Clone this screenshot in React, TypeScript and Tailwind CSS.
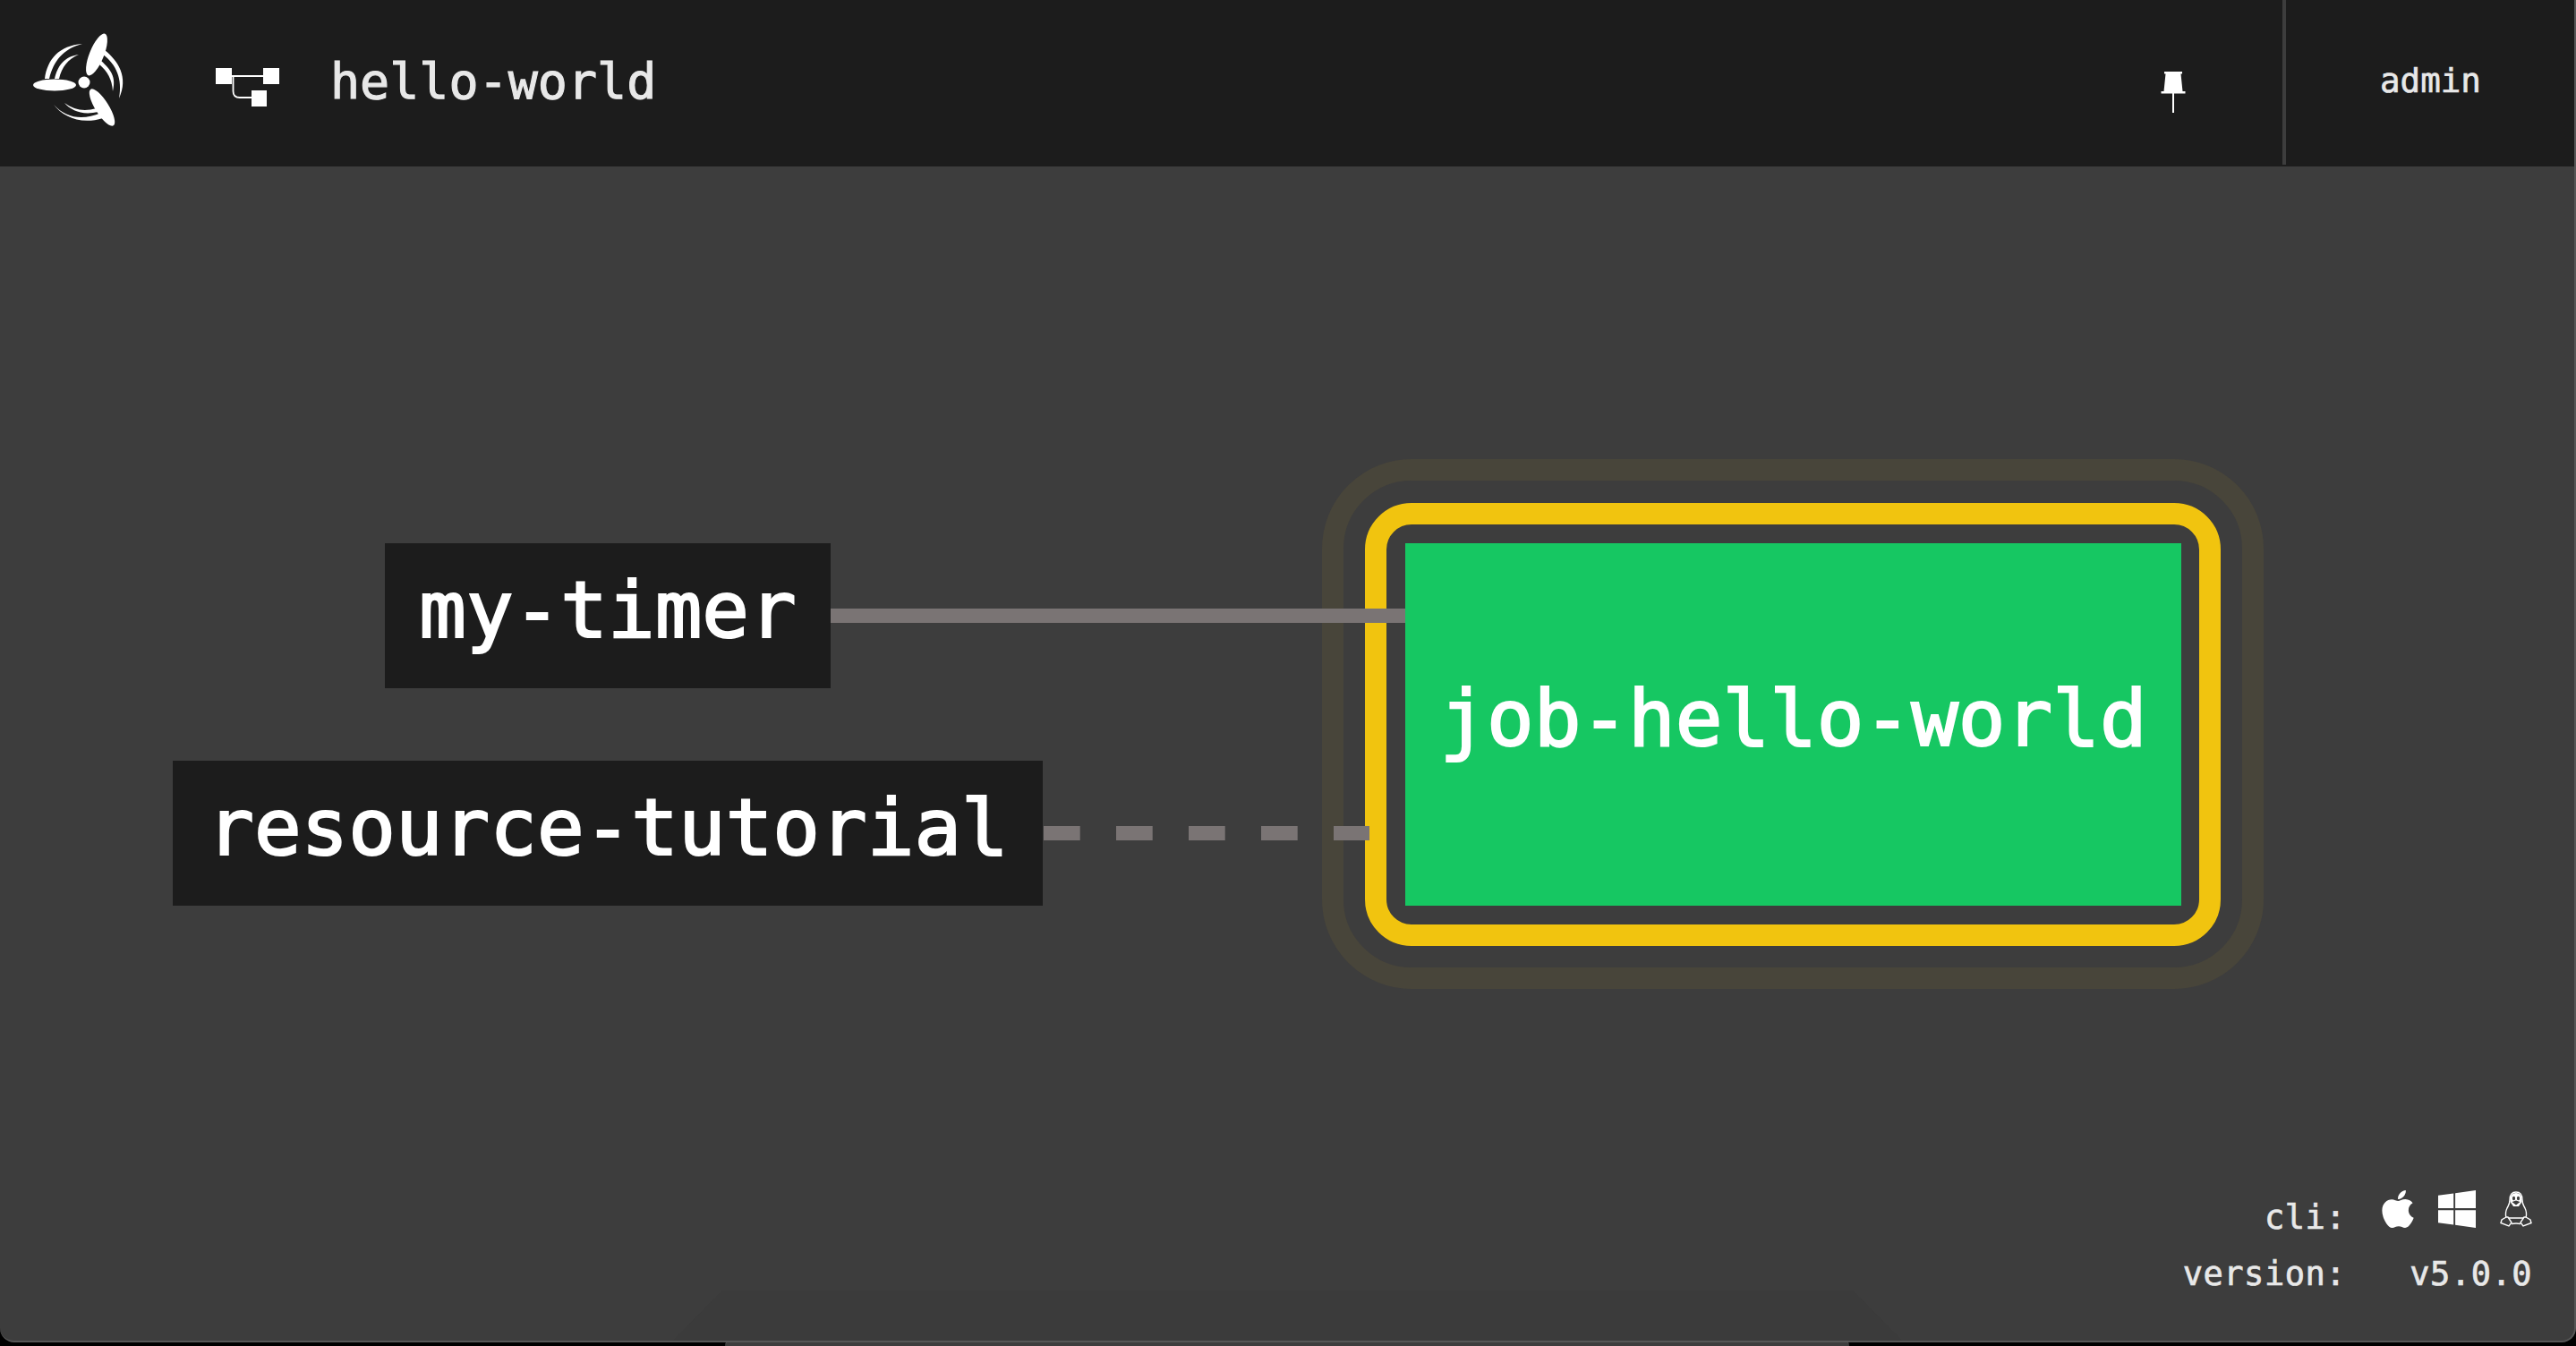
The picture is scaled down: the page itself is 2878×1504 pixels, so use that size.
import { FaApple, FaWindows } from "react-icons/fa";

const mono = "font-['DejaVu_Sans_Mono',monospace]";

function Logo() {
  return (
    <svg viewBox="0 0 130 130" className="h-[130px] w-[130px]" fill="#fff">
      <circle cx="74" cy="72" r="6.5" />
      <ellipse cx="41" cy="75" rx="24" ry="6.5" />
      <ellipse cx="0" cy="0" rx="25" ry="8" transform="translate(88 41) rotate(-68)" />
      <ellipse cx="0" cy="0" rx="24" ry="7.5" transform="translate(94 100) rotate(58)" />
      <path d="M30 68C33 46 46 31 72 29C50 35 40 48 35 68Z" />
      <path d="M41 68C44 54 52 43 68 41C56 46 49 55 46 68Z" />
      <path d="M97 36C112 48 124 66 113 90C117 68 110 52 95 41Z" />
      <path d="M93 48C104 58 110 66 106 82C105 68 100 60 91 52Z" />
      <path d="M40 97C50 110 70 120 95 112L93 106C72 115 54 112 40 97Z" />
      <path d="M52 95C60 104 72 109 90 105L88 101C74 105 63 103 52 95Z" />
    </svg>
  );
}

function GraphIcon() {
  return (
    <svg viewBox="0 0 72 46" className="h-[46px] w-[72px]">
      <rect x="0" y="0" width="18" height="18" fill="#fff" />
      <rect x="53" y="0" width="18" height="18" fill="#fff" />
      <rect x="40" y="25" width="17" height="18" fill="#fff" />
      <path d="M18 9H54M19.5 10V26Q19.5 33 27 33H40" stroke="#fff" strokeWidth="1.8" fill="none" />
    </svg>
  );
}

function PinIcon() {
  return (
    <svg viewBox="0 0 28 46" className="h-[46px] w-[28px]" fill="#fff">
      <path d="M4 0H24V2.5H22.5L24.5 22H27.5V24.5H0.5V22H3.5L5.5 2.5H4Z" />
      <rect x="13" y="24" width="2" height="22" />
    </svg>
  );
}

function TuxIcon() {
  return (
    <svg viewBox="0 0 36 40" className="h-[40px] w-[36px]" fill="none" stroke="#fff" strokeWidth="1.4">
      <path d="M18 1C12.5 1 11 5 11 10C11 14 10 15 8 19C6 23 6 26 7 30H29C30 26 30 23 28 19C26 15 25 14 25 10C25 5 23.5 1 18 1Z" />
      <path d="M7 29L2 32L1 35.5L10 39L13 35L9 29ZM29 29L34 32L35 35.5L26 39L23 35L27 29Z" fill="#3d3d3d" />
      <path d="M13 36.5Q18 35.5 23 36.5" />
      <path d="M11.5 12C11 5 14 2 18 2C22 2 25 5 24.5 12L21 17H15Z" fill="#fff" stroke="none" />
      <ellipse cx="15.5" cy="8" rx="1.6" ry="2.2" fill="#3d3d3d" stroke="none" />
      <ellipse cx="20.5" cy="8" rx="1.6" ry="2.2" fill="#3d3d3d" stroke="none" />
      <path d="M13.5 12L18 10.5L22.5 12L18 15.5Z" fill="#3d3d3d" stroke="none" />
    </svg>
  );
}

function Edges() {
  return (
    <svg className="absolute left-0 top-0 h-[1504px] w-[2878px]" viewBox="0 0 2878 1504">
      <line x1="928" y1="688" x2="1570" y2="688" stroke="#7a7474" strokeWidth="16" />
      <line x1="1166" y1="931" x2="1530" y2="931" stroke="#7a7474" strokeWidth="16" strokeDasharray="40.7 40.3" />
    </svg>
  );
}

function TaskNode({ label, className }: { label: string; className: string }) {
  return (
    <div className={`absolute flex h-[162px] items-center justify-center bg-[#1c1c1c] pb-[10px] text-[87.5px] leading-none text-white [-webkit-text-stroke:2.2px_white] ${className}`}>
      {label}
    </div>
  );
}

export default function App() {
  return (
    <div className={`relative h-[1504px] w-[2878px] overflow-hidden bg-black ${mono}`}>
      <div className="absolute bottom-0 left-[810px] h-[8px] w-[1256px] rounded-t-[8px] border-t-2 border-[#565656] bg-[#3d3d3d]" />
      <div className="relative flex h-[1500px] flex-col overflow-hidden rounded-b-[16px] border-r-2 border-b-2 border-[#565656] bg-[#3d3d3d]">
        <header className="flex h-[186px] shrink-0 items-center bg-[#1c1c1c] text-[#e8e8e8]">
          <div className="ml-[20px] mt-[-16px]">
            <Logo />
          </div>
          <div className="ml-[91px] mt-[12px]">
            <GraphIcon />
          </div>
          <span className="ml-[56px] mt-[-4px] text-[55px] leading-none [-webkit-text-stroke:1.1px_#e8e8e8]">hello-world</span>
          <div className="ml-auto mr-[108px] mt-[20px]">
            <PinIcon />
          </div>
          <div className="flex h-[184px] w-[326px] items-center self-start border-l-[4px] border-[#3d3d3d] pl-[105px] pb-[2px] text-[37.5px] leading-none [-webkit-text-stroke:0.7px_#e8e8e8]">
            admin
          </div>
        </header>

        <div className="absolute bottom-0 left-[752px] h-[56px] w-[1373px] bg-[#3b3b3b] [clip-path:polygon(4%_0,96%_0,100%_100%,0_100%)]" />

        <div className="absolute left-[1477px] top-[513px] h-[592px] w-[1052px] rounded-[100px] border-[24px] border-[#48453a]" />
        <div className="absolute left-[1525px] top-[562px] h-[495px] w-[956px] rounded-[52px] border-[24px] border-[#f1c40f]" />
        <div className="absolute left-[1570px] top-[607px] flex h-[405px] w-[867px] items-center justify-center bg-[#16c762] pb-[12px] text-[87.5px] leading-none text-white [-webkit-text-stroke:2.2px_white]">
          job-hello-world
        </div>

        <TaskNode label="my-timer" className="left-[430px] top-[607px] w-[498px]" />
        <TaskNode label="resource-tutorial" className="left-[193px] top-[850px] w-[972px]" />
        <Edges />

        <div className="absolute right-[47px] top-[1330px] grid grid-cols-[auto_auto] gap-x-[40px] gap-y-[33px] text-[37px] leading-none tracking-[0.5px] text-[#e8e8e8] [-webkit-text-stroke:0.7px_#e8e8e8]">
          <span className="self-end justify-self-end translate-y-[7px]">cli:</span>
          <div className="flex h-[42px] items-center gap-[27px] text-white [-webkit-text-stroke:0]">
            <FaApple className="h-[50px] w-[36px]" />
            <FaWindows className="h-[48px] w-[42px]" />
            <TuxIcon />
          </div>
          <span className="justify-self-end">version:</span>
          <span className="justify-self-end">v5.0.0</span>
        </div>
      </div>
    </div>
  );
}
